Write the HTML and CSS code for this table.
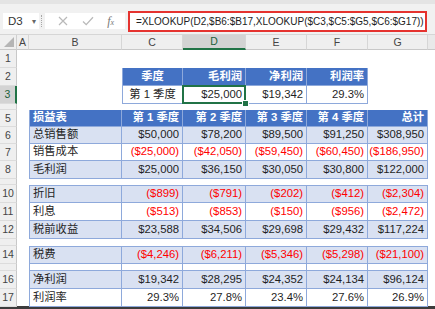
FILE: index.html
```html
<!DOCTYPE html>
<html lang="zh-CN">
<head>
<meta charset="utf-8">
<title>XLOOKUP</title>
<link rel="stylesheet" href="styles.css">
</head>
<body>
<div class="app">
  <div class="fbar">
    <div class="namebox"><span class="ref">D3</span><span class="caret">▾</span></div>
    <div class="grip"></div>
    <div class="btns">
      <svg class="ico" width="10" height="10" viewBox="0 0 10 10"><path d="M1 1L9 9M9 1L1 9" stroke="#b9b9b9" stroke-width="1.2" fill="none"/></svg>
      <svg class="ico" width="12" height="10" viewBox="0 0 12 10"><path d="M1 5.5L4.2 8.6L11 1.2" stroke="#b9b9b9" stroke-width="1.3" fill="none"/></svg>
      <span class="fx">f<span class="x">x</span></span>
    </div>
    <div class="formula">=XLOOKUP(D2,$B6:$B17,XLOOKUP($C3,$C5:$G5,$C6:$G17))</div>
  </div>

  <div class="sheet">
    <div class="row hdr-row">
      <div class="corner"><svg width="10" height="10" viewBox="0 0 10 10"><polygon points="10,0 10,10 0,10" fill="#b5b5b5"/></svg></div>
      <div class="ch">A</div><div class="ch">B</div><div class="ch">C</div><div class="ch ch-sel">D</div><div class="ch">E</div><div class="ch">F</div><div class="ch">G</div><div class="ch rest"></div>
    </div>

    <div class="row r18"><div class="rh">1</div><div></div><div></div><div></div><div></div><div></div><div></div><div></div><div></div></div>

    <div class="row r18"><div class="rh">2</div><div></div><div></div>
      <div class="c th ctr bl">季度</div><div class="c th rt">毛利润</div><div class="c th rt">净利润</div><div class="c th rt">利润率</div>
      <div></div><div></div></div>

    <div class="row r18"><div class="rh rh-sel">3</div><div></div><div></div>
      <div class="c bd ctr bl">第 1 季度</div><div class="c bd rt sel">$25,000</div><div class="c bd rt">$19,342</div><div class="c bd rt">29.3%</div>
      <div></div><div></div></div>

    <div class="row r6"><div class="rh"></div><div></div><div></div><div></div><div></div><div></div><div></div><div></div><div></div></div>

    <div class="row r17"><div class="rh">5</div><div></div>
      <div class="c th bl">损益表</div><div class="c th rt">第 1 季度</div><div class="c th rt">第 2 季度</div><div class="c th rt">第 3 季度</div><div class="c th rt">第 4 季度</div><div class="c th rt">总计</div><div></div></div>

    <div class="row r17"><div class="rh">6</div><div></div>
      <div class="c bd band bl">总销售额</div><div class="c bd band rt">$50,000</div><div class="c bd band rt">$78,200</div><div class="c bd band rt">$89,500</div><div class="c bd band rt">$91,250</div><div class="c bd band rt">$308,950</div><div></div></div>

    <div class="row r17"><div class="rh">7</div><div></div>
      <div class="c bd bl">销售成本</div><div class="c bd rt neg">($25,000)</div><div class="c bd rt neg">($42,050)</div><div class="c bd rt neg">($59,450)</div><div class="c bd rt neg">($60,450)</div><div class="c bd rt neg">($186,950)</div><div></div></div>

    <div class="row r18"><div class="rh">8</div><div></div>
      <div class="c bd band bl">毛利润</div><div class="c bd band rt">$25,000</div><div class="c bd band rt">$36,150</div><div class="c bd band rt">$30,050</div><div class="c bd band rt">$30,800</div><div class="c bd band rt">$122,000</div><div></div></div>

    <div class="row r6"><div class="rh"></div><div></div><div></div><div></div><div></div><div></div><div></div><div></div><div></div></div>

    <div class="row r18"><div class="rh">10</div><div></div>
      <div class="c bd band bl bt">折旧</div><div class="c bd band rt neg bt">($899)</div><div class="c bd band rt neg bt">($791)</div><div class="c bd band rt neg bt">($202)</div><div class="c bd band rt neg bt">($412)</div><div class="c bd band rt neg bt">($2,304)</div><div></div></div>

    <div class="row r18"><div class="rh">11</div><div></div>
      <div class="c bd bl">利息</div><div class="c bd rt neg">($513)</div><div class="c bd rt neg">($853)</div><div class="c bd rt neg">($150)</div><div class="c bd rt neg">($956)</div><div class="c bd rt neg">($2,472)</div><div></div></div>

    <div class="row r18"><div class="rh">12</div><div></div>
      <div class="c bd band bl">税前收益</div><div class="c bd band rt">$23,588</div><div class="c bd band rt">$34,506</div><div class="c bd band rt">$29,698</div><div class="c bd band rt">$29,432</div><div class="c bd band rt">$117,224</div><div></div></div>

    <div class="row r7"><div class="rh"></div><div></div><div></div><div></div><div></div><div></div><div></div><div></div><div></div></div>

    <div class="row r18"><div class="rh">14</div><div></div>
      <div class="c bd band bl bt">税费</div><div class="c bd band rt neg bt">($4,246)</div><div class="c bd band rt neg bt">($6,211)</div><div class="c bd band rt neg bt">($5,346)</div><div class="c bd band rt neg bt">($5,298)</div><div class="c bd band rt neg bt">($21,100)</div><div></div></div>

    <div class="row r7"><div class="rh"></div><div></div>
      <div class="c bd bl"></div><div class="c bd"></div><div class="c bd"></div><div class="c bd"></div><div class="c bd"></div><div class="c bd"></div><div></div></div>

    <div class="row r18"><div class="rh">16</div><div></div>
      <div class="c bd band bl">净利润</div><div class="c bd band rt">$19,342</div><div class="c bd band rt">$28,295</div><div class="c bd band rt">$24,352</div><div class="c bd band rt">$24,134</div><div class="c bd band rt">$96,124</div><div></div></div>

    <div class="row r18"><div class="rh">17</div><div></div>
      <div class="c bd bl">利润率</div><div class="c bd rt">29.3%</div><div class="c bd rt">27.8%</div><div class="c bd rt">23.4%</div><div class="c bd rt">27.6%</div><div class="c bd rt">26.9%</div><div></div></div>
  </div>
</div>
</body>
</html>
```
FILE: styles.css
```css
html, body {
  margin: 0;
  padding: 0;
  background: #ffffff;
}
body {
  width: 435px;
  height: 309px;
  overflow: hidden;
  font-family: "Liberation Sans", "Noto Sans CJK SC", sans-serif;
  color: #1f1f1f;
}
.app {
  width: 435px;
  height: 309px;
  box-sizing: border-box;
  border-bottom: 3px solid #3c3c3c;
  display: flex;
  flex-direction: column;
}

/* formula bar */
.fbar {
  height: 35px;
  flex: none;
  box-sizing: border-box;
  display: flex;
  align-items: center;
  padding: 4px 8px 0 3px;
  background: #f1f1f1;
  border-top: 4px solid #e4e4e4;
  border-bottom: 1px solid #d6d6d6;
}
.namebox {
  width: 36px;
  height: 16px;
  background: #ffffff;
  display: flex;
  align-items: center;
  justify-content: space-between;
  padding: 0 3px 0 5px;
  box-sizing: border-box;
  font-size: 11.5px;
  color: #333;
}
.caret {
  font-size: 8px;
  color: #666;
}
.grip {
  width: 1px;
  height: 12px;
  margin: 0 2px 0 2px;
  border-left: 1px dotted #a8a8a8;
}
.btns {
  width: 80px;
  height: 16px;
  background: #ffffff;
  display: flex;
  align-items: center;
  justify-content: space-around;
  padding: 0 4px 0 6px;
  box-sizing: border-box;
}
.fx {
  font-family: "Liberation Serif", serif;
  font-style: italic;
  font-size: 12px;
  color: #777;
}
.fx .x {
  font-size: 8px;
}
.formula {
  flex: 1;
  margin-left: 3px;
  height: 21px;
  box-sizing: border-box;
  border: 2px solid #e5332f;
  background: #ffffff;
  display: flex;
  align-items: center;
  padding-left: 6px;
  font-size: 10px;
  color: #222;
  white-space: nowrap;
  overflow: hidden;
}

/* sheet grid */
.sheet {
  flex: 1;
  display: flex;
  flex-direction: column;
}
.row {
  display: grid;
  grid-template-columns: 17px 12px 93px 61px 63px 61px 61px 60px 1fr;
}
.hdr-row { height: 15px; }
.r17 { height: 17px; }
.r18 { height: 18px; }
.r6 { height: 6px; }
.r7 { height: 7px; }

.corner {
  background: #efefef;
  border-right: 1px solid #cfcfcf;
  border-bottom: 1px solid #c8c8c8;
  box-sizing: border-box;
  display: flex;
  align-items: flex-end;
  justify-content: flex-end;
  padding: 0 2px 2px 0;
}
.ch {
  background: #efefef;
  border-right: 1px solid #d6d6d6;
  border-bottom: 1px solid #c8c8c8;
  box-sizing: border-box;
  font-size: 10.5px;
  color: #444;
  display: flex;
  align-items: center;
  justify-content: center;
  line-height: 1;
}
.ch.rest {
  border-right: none;
  background: #e9e9e9;
}
.ch-sel {
  background: #d3d3d3;
  border-bottom: 2px solid #217346;
  color: #1d5f3a;
}
.rh {
  background: #efefef;
  border-right: 1px solid #c8c8c8;
  border-bottom: 1px solid #dcdcdc;
  box-sizing: border-box;
  font-size: 10.5px;
  color: #444;
  display: flex;
  align-items: center;
  justify-content: center;
  line-height: 1;
  overflow: hidden;
}
.rh-sel {
  background: #d3d3d3;
  border-right: 2px solid #217346;
  color: #1d5f3a;
}

/* cells */
.c {
  box-sizing: border-box;
  display: flex;
  align-items: center;
  padding: 0 3px;
  font-size: 11.3px;
  line-height: 1;
  white-space: nowrap;
  overflow: visible;
}
.rt { justify-content: flex-end; }
.ctr { justify-content: center; }
.th {
  background: #4472c4;
  color: #ffffff;
  font-weight: bold;
  border-right: 1px solid #8ea9db;
  border-bottom: 1px solid #8ea9db;
}
.bd {
  border-right: 1px solid #8ea9db;
  border-bottom: 1px solid #8ea9db;
}
.bl { border-left: 1px solid #8ea9db; }
.bt { border-top: 1px solid #8ea9db; }
.band { background: #d9e1f2; }
.neg { color: #ff0000; }

.sel {
  position: relative;
}
.sel::after {
  content: "";
  position: absolute;
  left: -1px;
  top: -1px;
  right: -1px;
  bottom: -1px;
  border: 2px solid #217346;
}
.sel::before {
  content: "";
  position: absolute;
  right: -4px;
  bottom: -4px;
  width: 5px;
  height: 5px;
  background: #217346;
  border: 1px solid #ffffff;
  z-index: 2;
}
```
